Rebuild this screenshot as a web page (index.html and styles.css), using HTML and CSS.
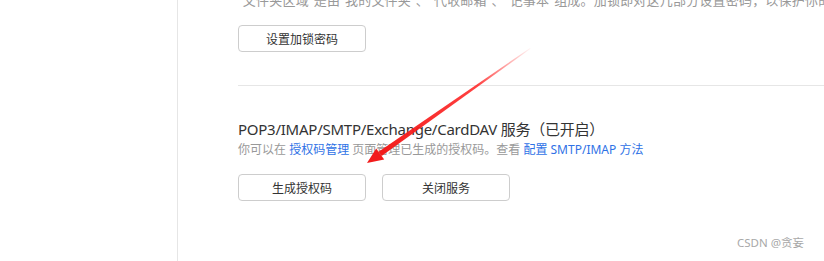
FILE: index.html
```html
<!DOCTYPE html>
<html lang="zh-CN">
<head>
    <meta charset="UTF-8">
    <meta name="viewport" content="width=device-width, initial-scale=1.0">
    <title>账户设置</title>
    <link rel="stylesheet" href="styles.css">
</head>
<body>
    <div class="page">
        <aside class="sidebar"></aside>

        <main class="content">
            <section class="block lock-block">
                <p class="desc">“文件夹区域”是由“我的文件夹”、“代收邮箱”、“记事本”组成。加锁即对这几部分设置密码，以保护你的隐私。</p>
                <button class="btn">设置加锁密码</button>
            </section>

            <section class="block service-block">
                <h2 class="title">POP3/IMAP/SMTP/Exchange/CardDAV 服务（已开启）</h2>
                <p class="hint">你可以在 <a href="#">授权码管理</a> 页面管理已生成的授权码。查看 <a href="#">配置 SMTP/IMAP 方法</a></p>
                <div class="actions">
                    <button class="btn">生成授权码</button>
                    <button class="btn">关闭服务</button>
                </div>
            </section>
        </main>
    </div>

    <!-- annotation arrow drawn over the page -->
    <svg class="arrow" width="824" height="261" viewBox="0 0 824 261">
        <defs>
            <linearGradient id="fade" x1="530" y1="48" x2="380" y2="154" gradientUnits="userSpaceOnUse">
                <stop offset="0" stop-color="#ff2a2a" stop-opacity="0.05"/>
                <stop offset="0.35" stop-color="#ff2020" stop-opacity="0.85"/>
                <stop offset="1" stop-color="#f21c1c" stop-opacity="1"/>
            </linearGradient>
        </defs>
        <polygon points="530,48 530.5,48.7 381.6,156 378.6,151.8" fill="url(#fade)"/>
        <polygon points="367,163 376.2,148.4 384.2,159.4" fill="#f21c1c"/>
    </svg>

    <div class="watermark">CSDN @贪妄</div>
</body>
</html>
```

FILE: styles.css
```css
body {
    margin: 0;
    font-family: "Noto Sans", "Noto Sans CJK SC", sans-serif;
    background-color: #fff;
    color: #333;
    overflow: hidden;
}

.page {
    display: flex;
    height: 261px;
}

.sidebar {
    width: 177px;
    flex-shrink: 0;
    border-right: 1px solid #e6e6e6;
}

.content {
    flex: 1;
    padding-left: 60px;
    overflow: hidden;
}

.block {
    white-space: nowrap;
}

.lock-block {
    padding-bottom: 33px;
    border-bottom: 1px solid #e6e6e6;
}

.desc {
    margin: -9px 0 16px;
    font-size: 13px;
    line-height: 18px;
    letter-spacing: 0.2px;
    color: #999;
}

.btn {
    width: 128px;
    height: 27px;
    padding: 0;
    background-color: #fff;
    border: 1px solid #cdcdcd;
    border-radius: 4px;
    font-family: "Noto Sans CJK SC", sans-serif;
    font-size: 12px;
    color: #333;
    cursor: pointer;
}

.btn:hover {
    border-color: #aaa;
}

.service-block {
    padding-top: 32px;
}

.title {
    margin: 0;
    font-size: 15px;
    font-weight: normal;
    line-height: 22px;
    letter-spacing: -0.25px;
    color: #333;
}

.hint {
    margin: 1px 0 0;
    font-size: 12px;
    line-height: 18px;
    color: #999;
}

.hint a {
    color: #2f72e6;
    text-decoration: none;
}

.actions {
    display: flex;
    gap: 16px;
    margin-top: 15px;
}

.arrow {
    position: absolute;
    left: 0;
    top: 0;
    pointer-events: none;
}

.watermark {
    position: absolute;
    right: 20px;
    bottom: 11px;
    font-size: 11.5px;
    color: #a8a8a8;
}
```
